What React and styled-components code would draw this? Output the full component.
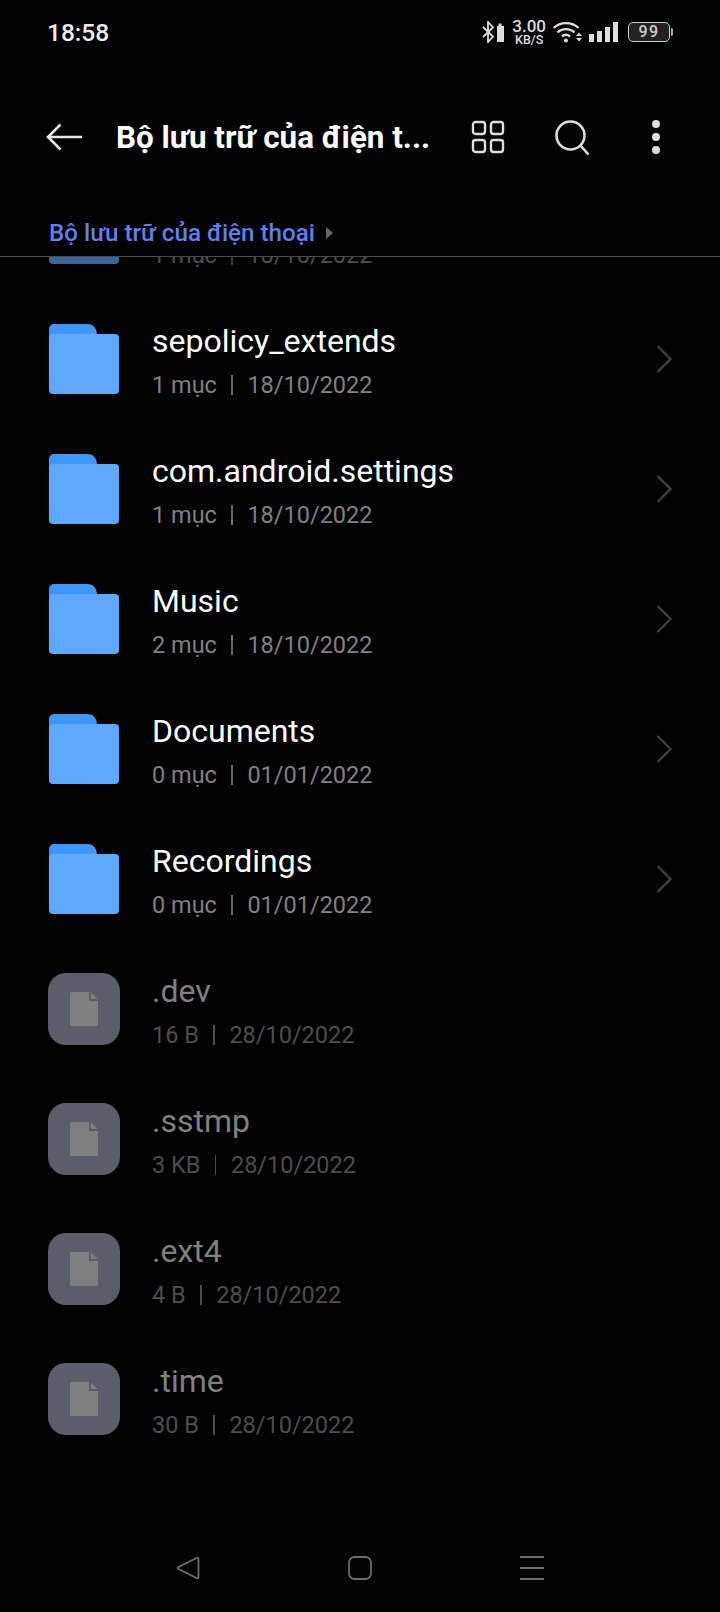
import React from "react";
import styled, { createGlobalStyle } from "styled-components";

const GlobalStyle = createGlobalStyle`
  html, body { margin: 0; padding: 0; background: #000; }
  body { font-family: Roboto, "Noto Sans", sans-serif; }
`;

const folders = [
  { name: "", meta: "1 mục", date: "18/10/2022", faded: true },
  { name: "sepolicy_extends", meta: "1 mục", date: "18/10/2022" },
  { name: "com.android.settings", meta: "1 mục", date: "18/10/2022" },
  { name: "Music", meta: "2 mục", date: "18/10/2022" },
  { name: "Documents", meta: "0 mục", date: "01/01/2022" },
  { name: "Recordings", meta: "0 mục", date: "01/01/2022" },
];

const files = [
  { name: ".dev", meta: "16 B", date: "28/10/2022" },
  { name: ".sstmp", meta: "3 KB", date: "28/10/2022" },
  { name: ".ext4", meta: "4 B", date: "28/10/2022" },
  { name: ".time", meta: "30 B", date: "28/10/2022" },
];

const FolderIcon = () => (
  <svg width="71" height="70" viewBox="-1 0 71 70">
    <path d="M0 5a5 5 0 0 1 5-5h33c6 0 9 3 10 10v10H0z" fill="#3f96fb" />
    <rect x="0" y="10" width="70" height="60" rx="4" fill="#5fa8ff" />
  </svg>
);

const FileGlyph = () => (
  <svg width="28" height="34" viewBox="0 0 28 34">
    <path d="M1.500 0H19v9h9v23.500a1.500 1.500 0 0 1-1.500 1.500h-25A1.500 1.500 0 0 1 0 32.500v-31A1.500 1.500 0 0 1 1.500 0z" fill="#808080" />
    <path d="M21 0.500 27.500 7H21z" fill="#808080" />
  </svg>
);

const Chevron = () => (
  <svg width="16" height="28" viewBox="0 0 16 28">
    <path d="M1.500 1 14.500 14 1.500 27" fill="none" stroke="#3f3f3f" strokeWidth="2.400" />
  </svg>
);

const App = () => (
  <Screen>
    <GlobalStyle />
    <StatusBar>
      <Clock>18:58</Clock>
      <StatusIcons>
        <svg width="23" height="22" viewBox="0 0 23 22">
          <path d="M1 6 11 15.500 6 21V1l5 5.500L1 16" fill="none" stroke="#ddd" strokeWidth="1.800" />
          <path d="M15 5h1.500V2.500h3V5H22v16h-7z" fill="#ddd" />
        </svg>
        <Speed>
          <SpeedValue>3.00</SpeedValue>
          <SpeedUnit>KB/S</SpeedUnit>
        </Speed>
        <svg width="29" height="22" viewBox="0 0 29 22">
          <g fill="none" stroke="#ddd" strokeWidth="2.400">
            <path d="M0.800 7C7 0.500 19 0.500 25.500 7" />
            <path d="M4.500 11.500c4.500-4.500 12.500-4.500 17 0" />
            <path d="M9 15.500c2.500-2.300 5.500-2.300 8 0" />
          </g>
          <circle cx="13" cy="19.500" r="2" fill="#ddd" />
          <path d="M23 15h6l-3-3.500zM23 17h6l-3 3.500z" fill="#ddd" />
        </svg>
        <svg width="29" height="20" viewBox="0 0 29 20">
          <g fill="#ddd">
            <rect x="0" y="12" width="5" height="8" />
            <rect x="8" y="9" width="5" height="11" />
            <rect x="16" y="5" width="5" height="15" />
            <rect x="24" y="0" width="5" height="20" />
          </g>
        </svg>
        <Battery>
          <BatteryBody>99</BatteryBody>
          <BatteryTip />
        </Battery>
      </StatusIcons>
    </StatusBar>

    <Toolbar>
      <IconSlot>
        <svg width="36" height="28" viewBox="0 0 36 28">
          <path d="M36 14H2M14.500 1.500 2 14l12.500 12.500" fill="none" stroke="#e6e6e6" strokeWidth="2.600" />
        </svg>
      </IconSlot>
      <Title>Bộ lưu trữ của điện t...</Title>
      <ToolIcons>
        <svg width="34" height="34" viewBox="0 0 34 34">
          <g fill="none" stroke="#ddd" strokeWidth="2.400">
            <rect x="2" y="2" width="12" height="12" rx="2.500" />
            <rect x="20" y="2" width="12" height="12" rx="2.500" />
            <rect x="2" y="20" width="12" height="12" rx="2.500" />
            <rect x="20" y="20" width="12" height="12" rx="2.500" />
          </g>
        </svg>
        <svg width="35" height="35" viewBox="0 0 35 35">
          <circle cx="15.500" cy="15.500" r="14" fill="none" stroke="#ddd" strokeWidth="2.600" />
          <path d="m25.500 25.500 8 9" fill="none" stroke="#ddd" strokeWidth="2.600" />
        </svg>
        <Dots>
          <Dot />
          <Dot />
          <Dot />
        </Dots>
      </ToolIcons>
    </Toolbar>

    <Breadcrumb>
      <Crumb>Bộ lưu trữ của điện thoại</Crumb>
      <CrumbArrow />
    </Breadcrumb>

    <ListViewport>
      <List>
        {folders.map((item, i) => (
          <Row key={i} $faded={item.faded}>
            <IconBox>
              <FolderIcon />
            </IconBox>
            <RowText>
              <Name>{item.name || "\u00a0"}</Name>
              <Meta>
                {item.meta}
                <Sep />
                {item.date}
              </Meta>
            </RowText>
            <Chevron />
          </Row>
        ))}
        {files.map((item) => (
          <Row key={item.name}>
            <IconBox>
              <FileTile>
                <FileGlyph />
              </FileTile>
            </IconBox>
            <RowText>
              <Name $hidden>{item.name}</Name>
              <Meta $hidden>
                {item.meta}
                <Sep $hidden />
                {item.date}
              </Meta>
            </RowText>
          </Row>
        ))}
      </List>
    </ListViewport>

    <NavBar>
      <svg width="24" height="24" viewBox="0 0 24 24">
        <path d="M22.500 2.500v19a1 1 0 0 1-1.500.8L2 12.800a1 1 0 0 1 0-1.600L21 1.700a1 1 0 0 1 1.500.8z" fill="none" stroke="#6e6e6e" strokeWidth="1.800" />
      </svg>
      <svg width="24" height="24" viewBox="0 0 24 24">
        <rect x="1" y="1" width="22" height="22" rx="5.500" fill="none" stroke="#6e6e6e" strokeWidth="1.800" />
      </svg>
      <MenuBars>
        <MenuBar />
        <MenuBar />
        <MenuBar />
      </MenuBars>
    </NavBar>
  </Screen>
);

const Screen = styled.div`
  width: 720px;
  height: 1612px;
  background: #000;
  display: flex;
  flex-direction: column;
  overflow: hidden;
`;

const StatusBar = styled.div`
  height: 64px;
  padding: 0 47px;
  box-sizing: border-box;
  display: flex;
  align-items: center;
  justify-content: space-between;
`;

const Clock = styled.span`
  color: #eee;
  font-size: 24.500px;
  font-weight: 500;
`;

const StatusIcons = styled.div`
  display: flex;
  align-items: center;
  gap: 7px;
`;

const Speed = styled.div`
  display: flex;
  flex-direction: column;
  align-items: center;
  color: #ddd;
`;

const SpeedValue = styled.span`
  font-size: 17px;
  font-weight: 500;
  line-height: 15px;
`;

const SpeedUnit = styled.span`
  font-size: 12.500px;
  font-weight: 500;
  line-height: 12px;
`;

const Battery = styled.div`
  display: flex;
  align-items: center;
  margin-left: 3px;
`;

const BatteryBody = styled.div`
  width: 42px;
  height: 20px;
  box-sizing: border-box;
  border: 1.500px solid #ccc;
  border-radius: 5px;
  background: #222;
  color: #ccc;
  font-size: 16px;
  font-weight: 500;
  letter-spacing: 1.500px;
  line-height: 17px;
  text-align: center;
`;

const BatteryTip = styled.div`
  width: 2px;
  height: 8px;
  margin-left: 1px;
  background: #aaa;
  border-radius: 0 2px 2px 0;
`;

const Toolbar = styled.div`
  height: 88px;
  padding: 0 0 0 46px;
  margin-top: 29px;
  flex-shrink: 0;
  display: flex;
  align-items: center;
`;

const IconSlot = styled.div`
  width: 70px;
  display: flex;
`;

const Title = styled.h1`
  margin: 0;
  width: 355px;
  color: #fff;
  font-size: 31.400px;
  font-weight: 700;
  white-space: nowrap;
`;

const ToolIcons = styled.div`
  display: flex;
  align-items: center;
  gap: 50px;
`;

const Dots = styled.div`
  display: flex;
  flex-direction: column;
  gap: 5px;
  margin-left: 12px;
`;

const Dot = styled.span`
  width: 8px;
  height: 8px;
  border-radius: 50%;
  background: #ddd;
`;

const Breadcrumb = styled.div`
  height: 76px;
  padding: 29px 0 0 49px;
  box-sizing: border-box;
  flex-shrink: 0;
  display: flex;
  align-items: center;
  gap: 11px;
  border-bottom: 1px solid #4a4a4a;
`;

const Crumb = styled.span`
  color: #5f80f0;
  font-size: 24.200px;
  font-weight: 500;
`;

const CrumbArrow = styled.span`
  border-left: 7px solid #666;
  border-top: 6px solid transparent;
  border-bottom: 6px solid transparent;
`;

const ListViewport = styled.div`
  flex: 1;
  min-height: 0;
  overflow: hidden;
`;

const List = styled.div`
  margin-top: -93px;
`;

const Row = styled.div`
  height: 130px;
  padding: 0 48px 0 48px;
  display: flex;
  align-items: center;
  opacity: ${(p) => (p.$faded ? 0.6 : 1)};
`;

const IconBox = styled.div`
  width: 104px;
  display: flex;
`;

const FileTile = styled.div`
  width: 72px;
  height: 72px;
  border-radius: 18px;
  background: #5b5e68;
  display: flex;
  align-items: center;
  justify-content: center;
`;

const RowText = styled.div`
  flex: 1;
  min-width: 0;
  padding-top: 3px;
`;

const Name = styled.div`
  color: ${(p) => (p.$hidden ? "#808080" : "#fff")};
  font-size: 32px;
  line-height: 36px;
`;

const Meta = styled.div`
  margin-top: 12px;
  color: ${(p) => (p.$hidden ? "#4d4d4d" : "#808080")};
  font-size: 23.500px;
  line-height: 28px;
  display: flex;
  align-items: center;
`;

const Sep = styled.span`
  width: 1.500px;
  height: 20px;
  margin: 0 14.500px;
  background: ${(p) => (p.$hidden ? "#4d4d4d" : "#666")};
`;

const NavBar = styled.div`
  height: 88px;
  padding: 0 176px;
  display: flex;
  align-items: center;
  justify-content: space-between;
  flex-shrink: 0;
`;

const MenuBars = styled.div`
  width: 24px;
  height: 24px;
  display: flex;
  flex-direction: column;
  justify-content: space-between;
`;

const MenuBar = styled.span`
  height: 2px;
  background: #6e6e6e;
`;

export default App;
